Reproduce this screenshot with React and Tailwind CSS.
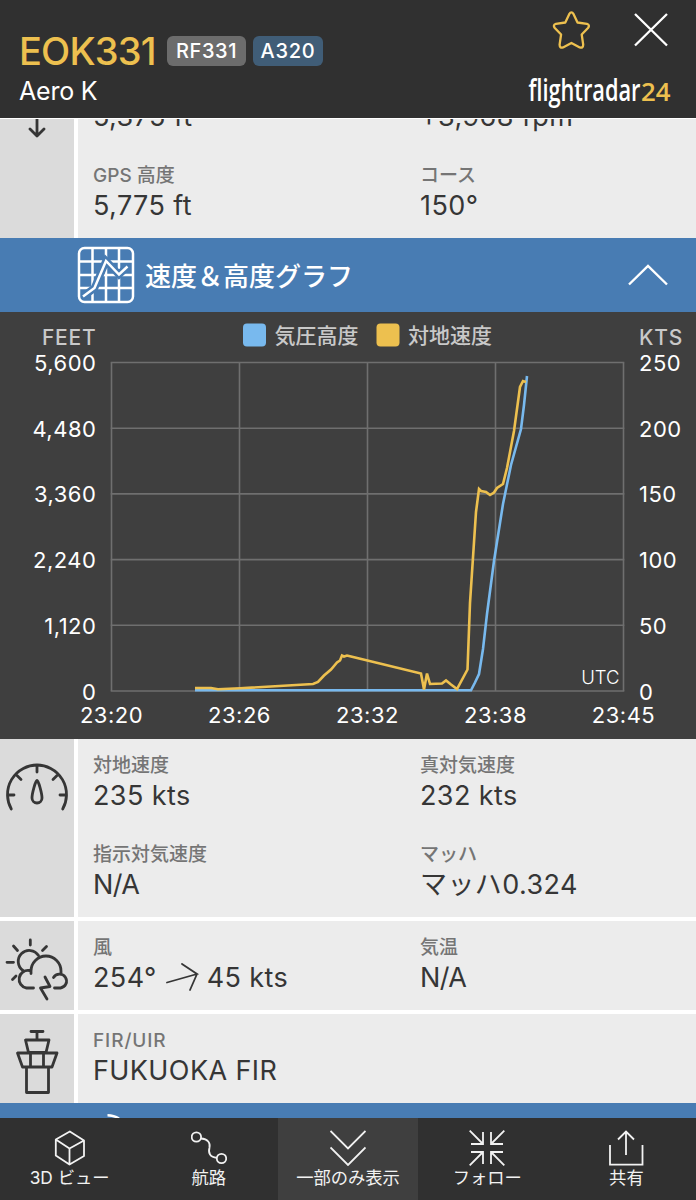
import clsx from "clsx";

const navItems = [
  { label: "3D ビュー", icon: <CubeIcon /> },
  { label: "航路", icon: <RouteIcon /> },
  { label: "一部のみ表示", icon: <CollapseIcon />, active: true },
  { label: "フォロー", icon: <FollowIcon /> },
  { label: "共有", icon: <ShareIcon /> },
];

const feetTicks = ["5,600", "4,480", "3,360", "2,240", "1,120", "0"];
const knotTicks = ["250", "200", "150", "100", "50", "0"];
const timeTicks = ["23:20", "23:26", "23:32", "23:38", "23:45"];

const speedLine =
  "195,376 211,376 218,377.3 240,376.3 313,372 318,370 324,363.5 331,357.5 337,350.5 340,348.5 342,343.5 344,344.5 347,343.5 351,344.5 421,361.5 424,377.5 427,361.5 430,372 442,371.5 446,368.5 451,372.5 457,377 467.5,357.5 470,291 476,200 479,177 481,179 486,180 490,183 494,180.5 497,176 503,172 507,156 514,119 520,75 523,69 526,70";
const altitudeLine =
  "195,378.3 471,378.3 475,370.5 479,362 483,337 487,302 494,249 503,192 511,153 521,117 524,93 527,64";

function App() {
  return (
    <div className="flex h-[1200px] w-[696px] flex-col overflow-hidden bg-white font-['Inter','Noto_Sans_CJK_JP',sans-serif] text-[#363636]">
      <Header />

      <div className="flex h-[120px] shrink-0 gap-1 border-t border-white">
        <IconCell>
          <path d="M37 -4V17M30 10L37 17L44 10" />
        </IconCell>
        <div className="flex flex-1 flex-col justify-end overflow-hidden bg-[#ececec]">
          <StatRow>
            <Stat value="5,375 ft" />
            <Stat value="+3,968 fpm" />
          </StatRow>
          <StatRow>
            <Stat label="GPS 高度" value="5,775 ft" />
            <Stat label="コース" value="150°" />
          </StatRow>
        </div>
      </div>

      <div className="flex h-[74px] shrink-0 items-center bg-[#487cb3] pr-[27px] pl-[77px]">
        <GraphIcon />
        <h2 className="mt-1 ml-[10px] flex-1 text-[26px] leading-9 font-medium text-white">
          速度＆高度グラフ
        </h2>
        <svg width="42" height="26" viewBox="0 0 42 26" fill="none" stroke="#fff" strokeWidth="2.4">
          <path d="M2 22.500L21 4L40 22.500" />
        </svg>
      </div>

      <Chart />

      <div className="flex shrink-0 flex-col gap-1">
        <div className="flex gap-1">
          <IconCell>
            <path d="M11.300 70A29.500 29.500 0 1 1 62.700 70M8 56H14M60 56H66M37 27V33M17 36.500L21 40.500M57 36.500L53 40.500" />
            <path d="M37 41.500C35.500 41.500 32 54.500 32 59A5 5 0 0 0 42 59C42 54.500 38.500 41.500 37 41.500Z" />
          </IconCell>
          <div className="flex-1 bg-[#ececec]">
            <StatRow>
              <Stat label="対地速度" value="235 kts" />
              <Stat label="真対気速度" value="232 kts" />
            </StatRow>
            <StatRow>
              <Stat label="指示対気速度" value="N/A" tight />
              <Stat label="マッハ" value="マッハ0.324" />
            </StatRow>
          </div>
        </div>

        <div className="flex gap-1">
          <IconCell>
            <path d="M30.300 19V24M13.500 25L17.500 29.500M46.500 25.500L42.500 29.500M7 41.300H13.500M12.500 58.500L16 55" />
            <path d="M38.500 34.500A11 11 0 1 0 23 49.500" />
            <path d="M33.500 67H26.500A8.800 8.800 0 1 1 29.500 49.500M31 52.500V50A15 15 0 0 1 61 50V52" />
            <path d="M53.500 56.500A7 7 0 1 1 60.500 67H54.500" />
            <path d="M45 56L50 65.500L40.500 67L47 78" />
          </IconCell>
          <div className="flex-1 bg-[#ececec]">
            <StatRow>
              <Stat
                label="風"
                value={
                  <>
                    254°
                    <svg className="mr-[7px] ml-[9px]" width="34" height="30" viewBox="0 0 34 30" fill="none" stroke="currentColor" strokeWidth="1.800" strokeLinecap="round">
                      <path d="M1 19.500L31 11L16 0.900M31 11L24 27" />
                    </svg>
                    45 kts
                  </>
                }
              />
              <Stat label="気温" value="N/A" tight />
            </StatRow>
          </div>
        </div>

        <div className="flex gap-1">
          <IconCell>
            <path d="M31 17.500H43M37 17.500V26M25.500 26H49L46 38.500H28.500ZM17.500 39H57L52 53H22.500ZM30.500 39V53M43.500 39V53M26.500 53V78.500H48.500V53" />
          </IconCell>
          <div className="flex-1 bg-[#ececec]">
            <StatRow>
              <Stat label={<span className="tracking-[0.9px]">FIR/UIR</span>} value="FUKUOKA FIR" />
            </StatRow>
          </div>
        </div>
      </div>

      <div className="h-[15px] shrink-0 bg-[#487cb3]">
        <svg width="696" height="15" fill="none" stroke="#fff" strokeWidth="2.500">
          <path d="M107.500 12.200Q114 12.200 119 15.500" />
        </svg>
      </div>

      <nav className="grid h-[82px] shrink-0 grid-cols-5 bg-[#303030] text-[#f2f2f2]">
        {navItems.map((item) => (
          <button
            key={item.label}
            className={clsx("flex flex-col items-center pt-3", item.active && "bg-[#3f3f3f]")}
          >
            <svg width="36" height="36" viewBox="0 0 36 36" fill="none" stroke="currentColor" strokeWidth="1.800">
              {item.icon}
            </svg>
            <span className="text-[17.3px] leading-6 whitespace-nowrap">{item.label}</span>
          </button>
        ))}
      </nav>
    </div>
  );
}

function Header() {
  return (
    <header className="flex h-[118px] shrink-0 justify-between bg-[#303030] pl-[19px]">
      <div className="pt-[27px]">
        <div className="flex items-center">
          <h1 className="w-[138px] text-[38px] leading-[48px] font-[450] tracking-[-0.8px] text-[#edc04f]">
            EOK331
          </h1>
          <span className="ml-[10px] flex h-[30px] w-[79px] items-center justify-center rounded-md bg-[#6c6c6c] text-[20px] font-medium tracking-[0.6px] text-white">
            RF331
          </span>
          <span className="ml-[7px] flex h-[30px] w-[70px] items-center justify-center rounded-md bg-[#405d77] text-[20px] font-medium tracking-[0.8px] text-white">
            A320
          </span>
        </div>
        <p className="text-[25px] leading-8 tracking-[-0.2px] text-white">Aero K</p>
      </div>

      <div className="flex flex-col items-end">
        <div className="flex gap-[42px] pt-[10px] pr-[27px]">
          <svg width="40" height="40" viewBox="0 0 40 40" fill="none" stroke="#edc04f" strokeWidth="2.300" strokeLinejoin="round">
            <path transform="translate(0.7 0.7)" d="M17.500 3.500Q19.700 0 21.900 3.500L25.800 11.800L35.200 13.200Q38.600 14.300 36.300 17.300L30 23.800L31.500 34Q31.400 37.800 28.100 36.700L19.700 32.200L11.300 36.700Q8 37.800 7.900 34L9.400 23.800L3.100 17.300Q0.800 14.300 4.200 13.200L13.600 11.800Z" />
          </svg>
          <svg width="36" height="40" viewBox="0 0 36 40" fill="none" stroke="#fff" strokeWidth="2.300">
            <path d="M2 4L34 35.500M34 4L2 35.500" />
          </svg>
        </div>
        <svg className="mt-[17px] font-['Open_Sans',sans-serif]" width="170" height="42" viewBox="0 0 170 42">
          <text x="2.500" y="33.500" textLength="112" lengthAdjust="spacingAndGlyphs" className="fill-white text-[31.5px] font-semibold">
            flightradar
          </text>
          <text x="115" y="33.500" textLength="29.500" lengthAdjust="spacingAndGlyphs" className="fill-[#edc04f] text-[25px] font-semibold">
            24
          </text>
        </svg>
      </div>
    </header>
  );
}

function Chart() {
  return (
    <svg className="shrink-0 bg-[#3f3f3f]" width="696" height="427" viewBox="0 0 696 427">
      <g className="fill-[#c9c9c9] text-[21px] font-medium">
        <text x="96.500" y="33" textAnchor="end" className="tracking-[0.8px]">FEET</text>
        <text x="639" y="33" className="tracking-[0.8px]">KTS</text>
        <rect x="243" y="11.500" width="23" height="23" rx="4" fill="#78b9ee" />
        <text x="274.500" y="31">気圧高度</text>
        <rect x="376.500" y="11.500" width="23" height="23" rx="4" fill="#edc04f" />
        <text x="408" y="31">対地速度</text>
      </g>

      <g stroke="#6f6f6f" strokeWidth="1.600">
        {feetTicks.map((tick, i) => (
          <line key={tick} x1="110.700" x2="624.300" y1={50.5 + i * 65.7} y2={50.5 + i * 65.7} />
        ))}
        {timeTicks.map((tick, i) => (
          <line key={tick} x1={111.5 + i * 128} x2={111.5 + i * 128} y1="50.500" y2="379" />
        ))}
      </g>

      <g className="fill-white text-[22px] tracking-[0.5px]">
        {feetTicks.map((tick, i) => (
          <text key={tick} x="96.400" y={59 + i * 65.7} textAnchor="end">{tick}</text>
        ))}
        {knotTicks.map((tick, i) => (
          <text key={tick} x="639" y={59 + i * 65.7}>{tick}</text>
        ))}
        {timeTicks.map((tick, i) => (
          <text key={tick} x={111.5 + i * 128} y="411" textAnchor="middle">{tick}</text>
        ))}
      </g>
      <text x="619.500" y="372" textAnchor="end" className="fill-white text-[18.5px] font-light">UTC</text>

      <polyline points={altitudeLine} fill="none" stroke="#78b9ee" strokeWidth="2.600" />
      <polyline points={speedLine} fill="none" stroke="#edc04f" strokeWidth="2.600" />
    </svg>
  );
}

function IconCell({ children }) {
  return (
    <div className="w-[74px] shrink-0 overflow-hidden bg-[#dbdbdb]">
      <svg width="74" height="89" viewBox="0 0 74 89" fill="none" stroke="#363636" strokeWidth="2.800" strokeLinecap="round" strokeLinejoin="round">
        {children}
      </svg>
    </div>
  );
}

function StatRow({ children }) {
  return <div className="grid h-[89px] shrink-0 grid-cols-[327px_1fr] pt-[15px] pl-[15px]">{children}</div>;
}

function Stat({ label, value, tight }) {
  return (
    <div>
      <div className="h-6 text-[19px] leading-6 font-medium text-[#757575]">{label}</div>
      <p
        className={clsx(
          "flex items-center text-[27px] leading-9",
          tight ? "tracking-[-0.6px]" : "tracking-[0.4px]"
        )}
      >
        {value}
      </p>
    </div>
  );
}

function GraphIcon() {
  const trend = "M6 50.500L17.500 42L29 15L42 28.500L50.500 20.500";
  return (
    <svg width="58" height="58" viewBox="0 0 58 58" fill="none" stroke="#fff" strokeWidth="2.500">
      <path d="M15.500 2V56M29 2V56M42 2V56M2 15.500H56M2 29H56M2 42H56" />
      <path d={trend} stroke="#487cb3" strokeWidth="7.500" />
      <path d={trend} />
      <rect x="2" y="2" width="54" height="54" rx="5.500" />
    </svg>
  );
}

function CubeIcon() {
  return <path d="M17.800 1.500L32 10.500V26L17.500 34.500L3.800 25.500V9.500ZM3.800 9.500L17.500 18.500L32 10.500M17.500 18.500V34.500" strokeLinejoin="round" />;
}

function RouteIcon() {
  return (
    <>
      <circle cx="5.400" cy="7" r="4.700" />
      <circle cx="30.500" cy="28.500" r="4.700" />
      <path d="M10 8.500C17 9 19.500 13 18.500 17.500C17 23 19 27.500 25.800 27.800" />
    </>
  );
}

function CollapseIcon() {
  return <path d="M0.500 1L18 18.500L35.500 1M0.500 17.500L18 35L35.500 17.500" />;
}

function FollowIcon() {
  return <path d="M0.700 0.700L14 14M14 2V14H2M35.300 0.700L22 14M22 2V14H34M0.700 35.300L14 22M14 34V22H2M35.300 35.300L22 22M22 34V22H34" />;
}

function ShareIcon() {
  return <path d="M18 25V1.500M10 9.500L18 1.500L26 9.500M2 15V34.700H34.500V15" />;
}

export default App;
